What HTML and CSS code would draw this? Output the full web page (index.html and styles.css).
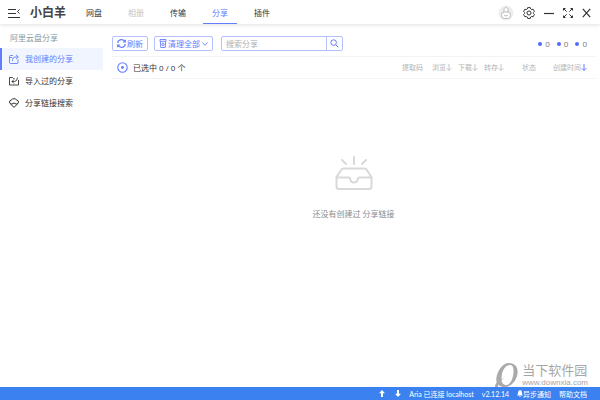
FILE: index.html
```html
<!DOCTYPE html>
<html lang="zh-CN">
<head>
    <meta charset="UTF-8">
    <meta name="viewport" content="width=device-width, initial-scale=1.0">
    <title>小白羊</title>
    <link rel="stylesheet" href="styles.css">
</head>
<body>

<header class="topbar">
    <button class="icon-btn" aria-label="菜单">
        <svg width="12" height="10" viewBox="0 0 12 10" fill="none" stroke="#333" stroke-width="1"><path d="M0 1.500h8M0 5.500h8M0 9.500h12M11.500 1.500l-2 2 2 2"/></svg>
    </button>
    <h1 class="brand">小白羊</h1>
    <nav class="tabs">
        <a href="#" class="tab">网盘</a>
        <a href="#" class="tab disabled">相册</a>
        <a href="#" class="tab">传输</a>
        <a href="#" class="tab active">分享</a>
        <a href="#" class="tab">插件</a>
    </nav>
    <div class="window-tools">
        <button class="icon-btn avatar" aria-label="账号">
            <svg width="16" height="16" viewBox="0 0 16 16"><circle cx="8" cy="8" r="7.500" fill="#eee"/><g fill="#fff" stroke="#bbb" stroke-width="1"><path d="M6 7V4.200c0-2.200 4-2.200 4 0V7"/><rect x="3.500" y="7" width="9" height="6.500" rx="3"/><path d="M6 10c1 1.200 3 1.200 4 0"/></g></svg>
        </button>
        <button class="icon-btn" aria-label="设置">
            <svg width="12" height="12" viewBox="0 0 12 12" fill="none" stroke="#333" stroke-width="1"><path d="M4.700.6h2.600l.4 1.400 1 .6 1.400-.4 1.300 2.300-1 1v1l1 1-1.300 2.300-1.400-.4-1 .6-.4 1.400H4.700L4.300 10l-1-.6-1.400.4L.6 7.500l1-1v-1l-1-1 1.300-2.300 1.400.4 1-.6z"/><circle cx="6" cy="6" r="2"/></svg>
        </button>
        <button class="icon-btn" aria-label="最小化">
            <svg width="10" height="10" viewBox="0 0 10 10" stroke="#333" stroke-width="1.200"><path d="M0 5.500h10"/></svg>
        </button>
        <button class="icon-btn" aria-label="最大化">
            <svg width="10" height="10" viewBox="0 0 10 10" fill="none" stroke="#333" stroke-width="1"><path d="M.5 2.500v-2h2M.5.5l3.200 3.200M7.500.5h2v2M9.500.5L6.300 3.700M.5 7.500v2h2M.5 9.500l3.200-3.200M9.500 7.500v2h-2M9.500 9.500L6.300 6.300"/></svg>
        </button>
        <button class="icon-btn" aria-label="关闭">
            <svg width="9" height="10" viewBox="0 0 9 10" stroke="#333" stroke-width="1.200"><path d="M.8.8l7.400 8.400M8.200.8L.8 9.200"/></svg>
        </button>
    </div>
</header>

<div class="layout">
    <aside class="sidebar">
        <h2 class="side-title">阿里云盘分享</h2>
        <a href="#" class="side-item active">
            <svg width="10" height="10" viewBox="0 0 10 10" fill="none" stroke="currentColor" stroke-width=".9"><path d="M4 1.500H1.500q-1 0-1 1v6q0 1 1 1h6.500q1 0 1-1V5.500M3.500 7V5.500q0-2 2.500-2.500h3M7 .8L9.300 3 7 5.200M.5 3.500h2.500"/></svg>
            我创建的分享
        </a>
        <a href="#" class="side-item">
            <svg width="10" height="10" viewBox="0 0 10 10" fill="none" stroke="currentColor" stroke-width=".9"><path d="M5.500 2.500H4.500L3.500 1.500H.5v7.500h9V4M8.500 1.500Q8.500 5 5.500 5.500H3M5 3.500l-2 2 2 2"/></svg>
            导入过的分享
        </a>
        <a href="#" class="side-item">
            <svg width="10" height="10" viewBox="0 0 10 10" fill="none" stroke="currentColor" stroke-width="1"><path d="M3 6H2Q.5 5.500.5 4T2 2.300Q3 .7 5 .7t3 1.600Q9.500 2.500 9.500 4T8 6H7M1.500 6L5 9.300 8.500 6M3 6q2-2 4 0"/></svg>
            分享链接搜索
        </a>
    </aside>

    <main class="content">
        <div class="toolbar">
            <button class="btn">
                <svg width="9" height="9" viewBox="0 0 9 9" fill="none" stroke="currentColor" stroke-width="1.200"><path d="M.7 4A3.800 3.800 0 0 1 8 3M8.300.8V3H6.100M8.300 5A3.800 3.800 0 0 1 1 6M.7 8.200V6h2.200"/></svg>
                刷新
            </button>
            <button class="btn">
                <svg width="8" height="9" viewBox="0 0 8 9" fill="none" stroke="currentColor" stroke-width=".9"><path d="M1 .5h6v1.800H1zM1.300 2.500l.5 6h4.400l.5-6"/><circle cx="4" cy="5.300" r="1.200"/></svg>
                清理全部
                <svg class="caret" width="6" height="4" viewBox="0 0 6 4" fill="none" stroke="currentColor" stroke-width=".9"><path d="M.5.5L3 3.300 5.500.5"/></svg>
            </button>
            <form class="search">
                <input type="text" class="search-input" placeholder="搜索分享" aria-label="搜索分享">
                <button type="submit" class="search-btn" aria-label="搜索">
                    <svg width="9" height="9" viewBox="0 0 9 9" fill="none" stroke="currentColor" stroke-width="1"><circle cx="3.600" cy="3.600" r="2.800"/><path d="M5.700 5.700l2.600 2.600"/></svg>
                </button>
            </form>
            <div class="counts">
                <span class="count">0</span>
                <span class="count">0</span>
                <span class="count">0</span>
            </div>
        </div>

        <div class="list-head">
            <button class="icon-btn select-all" aria-label="全选">
                <svg width="11" height="11" viewBox="0 0 11 11"><circle cx="5.500" cy="5.500" r="4.700" fill="none" stroke="currentColor" stroke-width="1.100"/><circle cx="5.500" cy="5.500" r="1.400" fill="currentColor"/></svg>
            </button>
            <span class="selected">已选中 0 / 0 个</span>
            <div class="columns">
                <span class="col col-code">提取码</span>
                <button class="col">浏览<svg width="6" height="7" viewBox="0 0 6 7" fill="none" stroke="currentColor" stroke-width=".8"><path d="M3 0v6.400M.7 4.200L3 6.500l2.300-2.300"/></svg></button>
                <button class="col">下载<svg width="6" height="7" viewBox="0 0 6 7" fill="none" stroke="currentColor" stroke-width=".8"><path d="M3 0v6.400M.7 4.200L3 6.500l2.300-2.300"/></svg></button>
                <button class="col">转存<svg width="6" height="7" viewBox="0 0 6 7" fill="none" stroke="currentColor" stroke-width=".8"><path d="M3 0v6.400M.7 4.200L3 6.500l2.300-2.300"/></svg></button>
                <span class="col col-state">状态</span>
                <button class="col">创建时间<svg class="sorted" width="6" height="7" viewBox="0 0 6 7" fill="none" stroke="currentColor" stroke-width="1"><path d="M3 0v6.400M.7 4.200L3 6.500l2.300-2.300"/></svg></button>
            </div>
        </div>

        <div class="empty">
            <svg width="38" height="34" viewBox="0 0 38 34" fill="none" stroke="#d9d9d9" stroke-width="2" stroke-linecap="round" stroke-linejoin="round"><path d="M19 1v7M7 4l4 4M31 4l-4 4"/><path d="M1.500 21L6.500 13.500q.5-1 2-1h21q1.500 0 2 1l5 7.500v9.500q0 2.500-2.500 2.500H4q-2.500 0-2.500-2.500zM1.500 21.500h12q1.500 0 1.800 2 .7 3 3.700 3t3.700-3q.3-2 1.800-2h12"/></svg>
            <p class="empty-text">还没有创建过 分享链接</p>
        </div>
    </main>
</div>

<footer class="statusbar">
    <svg width="6" height="7" viewBox="0 0 6 7" fill="#fff"><path d="M3 0l3 3.200H4V7H2V3.200H0z"/></svg>
    <svg class="down" width="6" height="7" viewBox="0 0 6 7" fill="#fff"><path d="M3 7l3-3.200H4V0H2v3.800H0z"/></svg>
    <span>Aria 已连接 localhost</span>
    <span>v2.12.14</span>
    <a href="#" class="notice"><svg width="6" height="7" viewBox="0 0 6 7" fill="#fff"><path d="M3 0Q5 .3 5 2.800T6 5.500H0Q1 5 1 2.800T3 0zM2 6h2L3 7z"/></svg>异步通知</a>
    <a href="#">帮助文档</a>
</footer>

<div class="watermark">
    <svg width="24" height="25" viewBox="0 0 24 25"><path fill="#aaa" fill-rule="evenodd" d="M14 0C21 0 24 6 22 13S14 25 8 24 0 18 2 12 8 0 14 0zM15 2C11 2 8 6 7 11s-1 10 3 11 7-4 8-9 1-11-3-11z"/><path fill="#aaa" d="M0 24C0 19 5 16 9 15 6 17 3 20 3 24z"/></svg>
    <div class="watermark-text">
        <span class="watermark-name">当下软件园</span>
        <span class="watermark-url">www.downxia.com</span>
    </div>
</div>

</body>
</html>
```
FILE: styles.css
```css
* {
    box-sizing: border-box;
}

body {
    display: flex;
    flex-direction: column;
    min-height: 100vh;
    margin: 0;
    font-family: "Open Sans", "Noto Sans CJK SC", sans-serif;
    font-size: 8px;
    line-height: 12px;
    color: #333;
    background: #fff;
}

a {
    color: inherit;
    text-decoration: none;
}

button,
input {
    padding: 0;
    border: none;
    background: none;
    font: inherit;
    color: inherit;
}

button {
    cursor: pointer;
}

svg {
    display: block;
    flex: none;
}

.icon-btn {
    display: flex;
}

/* top bar */
.topbar {
    display: flex;
    align-items: center;
    height: 24px;
    padding: 2px 9px 0 8px;
    box-shadow: 0 1px 4px rgba(0, 0, 0, 0.12);
}

.brand {
    margin: 0 11px 0 10px;
    font-size: 12px;
    line-height: 22px;
    font-weight: bold;
    color: #444;
}

.tabs {
    display: flex;
    gap: 8px;
}

.tab {
    height: 22px;
    padding: 0 9px;
    line-height: 22px;
    border-bottom: 1px solid transparent;
}

.tab.disabled {
    color: #c4c4c4;
}

.tab.active {
    color: #637dff;
    border-color: #637dff;
}

.window-tools {
    display: flex;
    align-items: center;
    gap: 9px;
    margin-left: auto;
}

/* sidebar */
.layout {
    display: flex;
    flex: 1;
}

.sidebar {
    width: 103px;
    padding-top: 4px;
}

.side-title {
    margin: 0;
    padding-left: 10px;
    font-size: 8px;
    line-height: 20px;
    font-weight: normal;
    color: #8a9a9e;
}

.side-item {
    display: flex;
    align-items: center;
    gap: 6px;
    height: 22px;
    padding-left: 7px;
    border-left: 2px solid transparent;
}

.side-item.active {
    color: #637dff;
    background: #f0f5ff;
    border-color: #637dff;
}

/* content */
.content {
    flex: 1;
    padding: 12px 5px 0 9px;
}

.toolbar {
    display: flex;
    align-items: center;
    height: 15px;
    gap: 6px;
}

.btn {
    display: flex;
    align-items: center;
    gap: 1px;
    height: 15px;
    padding: 0 4px;
    color: #637dff;
    border: 1px solid #b5c1ff;
    border-radius: 2px;
}

.caret {
    margin-left: 1px;
}

.search {
    display: flex;
    width: 122px;
    height: 15px;
    margin-left: 2px;
    border: 1px solid #b5c1ff;
    border-radius: 2px;
}

.search-input {
    flex: 1;
    min-width: 0;
    padding-left: 4px;
}

.search-input::placeholder {
    color: #b0b0b0;
}

.search-btn {
    display: flex;
    align-items: center;
    justify-content: center;
    width: 16px;
    color: #637dff;
    border-left: 1px solid #b5c1ff;
}

.counts {
    display: flex;
    gap: 7px;
    margin-left: auto;
    padding-right: 8px;
    color: #777;
}

.count {
    display: flex;
    align-items: center;
    gap: 3px;
}

.count::before {
    content: "";
    width: 4px;
    height: 4px;
    border-radius: 50%;
    background: #4f6bff;
}

.list-head {
    display: flex;
    align-items: center;
    height: 23px;
    margin-top: 5px;
    padding: 0 8px 0 5px;
    border-top: 1px solid #f3f3f3;
    border-bottom: 1px solid #f3f3f3;
}

.select-all {
    color: #637dff;
}

.selected {
    margin-left: 5px;
}

.columns {
    display: flex;
    gap: 6px;
    margin-left: auto;
    font-size: 7px;
    color: #b5b5b5;
}

.col {
    display: flex;
    align-items: center;
    white-space: nowrap;
}

.col-code {
    margin-right: 3px;
}

.col-state {
    margin: 0 11px 0 12px;
}

.sorted {
    color: #637dff;
}

.empty {
    display: flex;
    flex-direction: column;
    align-items: center;
    padding-top: 77px;
}

.empty-text {
    margin: 18px 0 0;
    color: #8c8c8c;
}

/* status bar */
.statusbar {
    display: flex;
    align-items: center;
    justify-content: flex-end;
    gap: 8px;
    height: 13px;
    padding-right: 13px;
    font-family: Lato, "Noto Sans CJK SC", sans-serif;
    font-size: 7px;
    color: #fff;
    background: #3b82f0;
}

.down {
    margin-left: 2px;
}

.notice {
    display: flex;
    align-items: center;
}

/* watermark lies over the page corner and the status bar */
.watermark {
    position: absolute;
    right: 12px;
    bottom: 12px;
    display: flex;
    gap: 3px;
    color: #a6a6a6;
}

.watermark-text {
    display: flex;
    flex-direction: column;
}

.watermark-name {
    font-size: 13px;
    line-height: 15px;
}

.watermark-url {
    font-family: "Liberation Sans", sans-serif;
    font-size: 8px;
    line-height: 9px;
}
```
